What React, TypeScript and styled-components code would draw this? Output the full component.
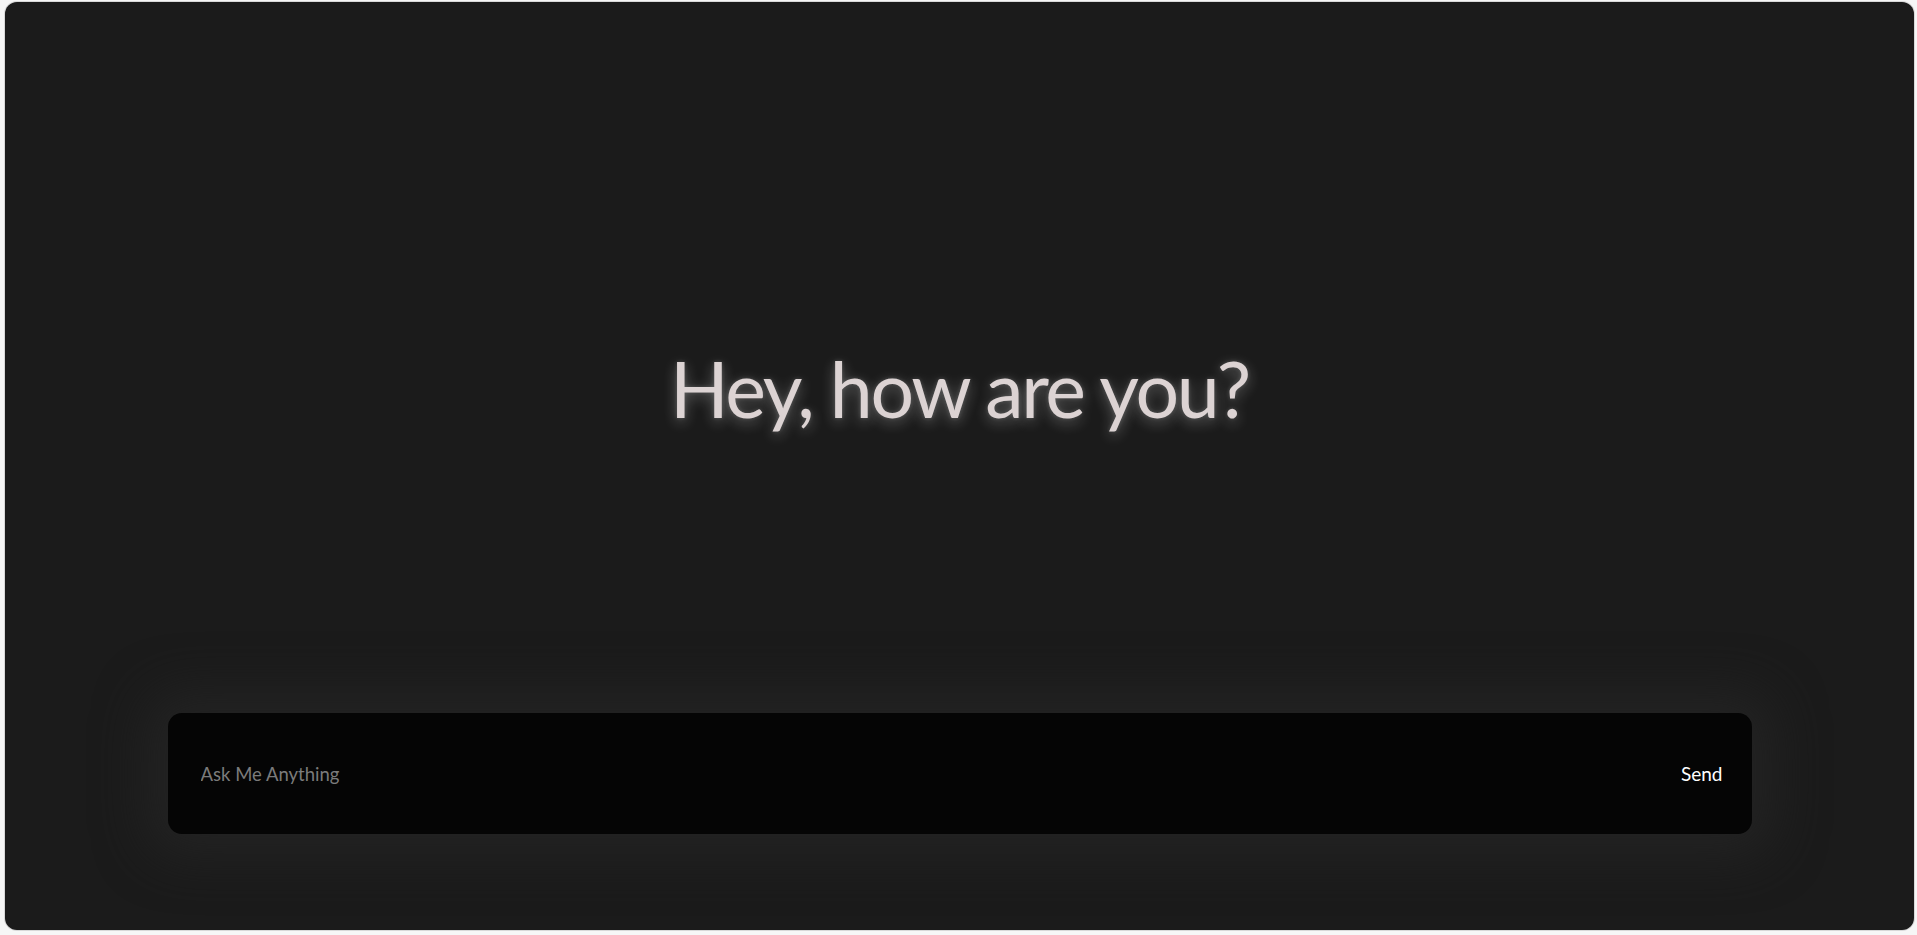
import React from "react";
import styled, { createGlobalStyle } from "styled-components";

const Global = createGlobalStyle`
  html, body { margin: 0; padding: 0; background: #f6f6f6; height: 100%; }
  #root { height: 100%; }
  * { box-sizing: border-box; }
`;

const Page = styled.div`
  height: 935px;
  padding: 2px 3px 5px 5px;
  display: flex;
`;

const Frame = styled.main`
  flex: 1;
  background: #1b1b1b;
  border-radius: 12px;
  box-shadow: 0 0 0 1px #d8d8d8;
  display: flex;
  flex-direction: column;
  align-items: center;
  overflow: hidden;
`;

const Hero = styled.section`
  flex: 1;
  width: 100%;
  display: flex;
  align-items: center;
  justify-content: center;
  padding-top: 60px;
`;

const Title = styled.h1`
  margin: 0;
  font-family: "Lato", "Inter", sans-serif;
  font-weight: 400;
  font-size: 77px;
  letter-spacing: -2.3px;
  color: #dcd3d3;
  text-shadow: 0 4px 14px rgba(255, 255, 255, 0.32), 0 0 4px rgba(255, 255, 255, 0.18);
`;

const Composer = styled.form`
  width: 1584px;
  height: 121px;
  margin: 0 0 96px 0;
  background: #050505;
  border-radius: 14px;
  display: flex;
  align-items: center;
  padding: 0 29px 0 31px;
  box-shadow: 0 0 50px 22px #232323;
`;

const Input = styled.input`
  flex: 1;
  background: transparent;
  border: none;
  outline: none;
  font-family: "Lato", sans-serif;
  font-size: 18.5px;
  color: #ddd;
  &::placeholder { color: #7b7b7b; }
`;

const SendButton = styled.button`
  background: transparent;
  border: none;
  color: #ffffff;
  font-family: "Lato", sans-serif;
  font-size: 19px;
  padding: 0;
  cursor: pointer;
`;

export default function App() {
  return (
    <>
      <Global />
      <Page>
        <Frame>
          <Hero>
            <Title>Hey, how are you?</Title>
          </Hero>
          <Composer onSubmit={(e) => e.preventDefault()}>
            <Input placeholder="Ask Me Anything" />
            <SendButton type="submit">Send</SendButton>
          </Composer>
        </Frame>
      </Page>
    </>
  );
}
